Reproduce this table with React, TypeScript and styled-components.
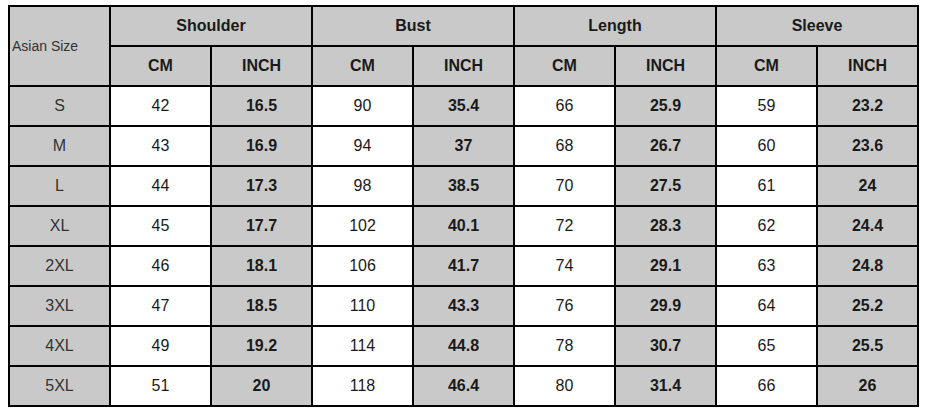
import { Fragment } from "react";
import styled, { createGlobalStyle } from "styled-components";

const Global = createGlobalStyle`
  html, body {
    margin: 0;
    background: #fff;
  }
  body {
    padding: 5px 0 0 8px;
    font-family: "Liberation Sans", Arial, sans-serif;
  }
`;

const rows: [string, number, number, number, number, number, number, number, number][] = [
  ["S", 42, 16.5, 90, 35.4, 66, 25.9, 59, 23.2],
  ["M", 43, 16.9, 94, 37, 68, 26.7, 60, 23.6],
  ["L", 44, 17.3, 98, 38.5, 70, 27.5, 61, 24],
  ["XL", 45, 17.7, 102, 40.1, 72, 28.3, 62, 24.4],
  ["2XL", 46, 18.1, 106, 41.7, 74, 29.1, 63, 24.8],
  ["3XL", 47, 18.5, 110, 43.3, 76, 29.9, 64, 25.2],
  ["4XL", 49, 19.2, 114, 44.8, 78, 30.7, 65, 25.5],
  ["5XL", 51, 20, 118, 46.4, 80, 31.4, 66, 26],
];

const groups = ["Shoulder", "Bust", "Length", "Sleeve"];

const Table = styled.table`
  border-collapse: collapse;
  table-layout: fixed;
  width: 911px;
  color: #1a1a1a;
`;

const Col = styled.col`
  width: 101px;
`;

const Head = styled.th<{ $corner?: boolean }>`
  height: 38px;
  padding: 0;
  border: 2px solid #000;
  background: #c9c9c9;
  font-size: ${(p) => (p.$corner ? "14px" : "16px")};
  font-weight: ${(p) => (p.$corner ? 400 : 700)};
  text-align: ${(p) => (p.$corner ? "left" : "center")};
  color: ${(p) => (p.$corner ? "#333" : "#1a1a1a")};
  padding-left: ${(p) => (p.$corner ? "2px" : "0")};
`;

const Cell = styled.td<{ $kind: "size" | "cm" | "inch" }>`
  height: 38px;
  padding: 0;
  border: 2px solid #000;
  text-align: center;
  font-size: 16px;
  background: ${(p) => (p.$kind === "cm" ? "#fff" : "#c9c9c9")};
  font-weight: ${(p) => (p.$kind === "inch" ? 700 : 400)};
  color: ${(p) => (p.$kind === "size" ? "#333" : "#1a1a1a")};
`;

export default function App() {
  return (
    <>
      <Global />
      <Table>
        <colgroup>
          {Array.from({ length: 9 }).map((_, i) => (
            <Col key={i} />
          ))}
        </colgroup>
        <thead>
          <tr>
            <Head $corner rowSpan={2}>
              Asian Size
            </Head>
            {groups.map((g) => (
              <Head key={g} colSpan={2}>
                {g}
              </Head>
            ))}
          </tr>
          <tr>
            {groups.map((g) => (
              <Fragment key={g}>
                <Head>CM</Head>
                <Head>INCH</Head>
              </Fragment>
            ))}
          </tr>
        </thead>
        <tbody>
          {rows.map(([size, ...vals]) => (
            <tr key={size}>
              <Cell $kind="size">{size}</Cell>
              {vals.map((v, i) => (
                <Cell key={i} $kind={i % 2 === 0 ? "cm" : "inch"}>
                  {v}
                </Cell>
              ))}
            </tr>
          ))}
        </tbody>
      </Table>
    </>
  );
}
